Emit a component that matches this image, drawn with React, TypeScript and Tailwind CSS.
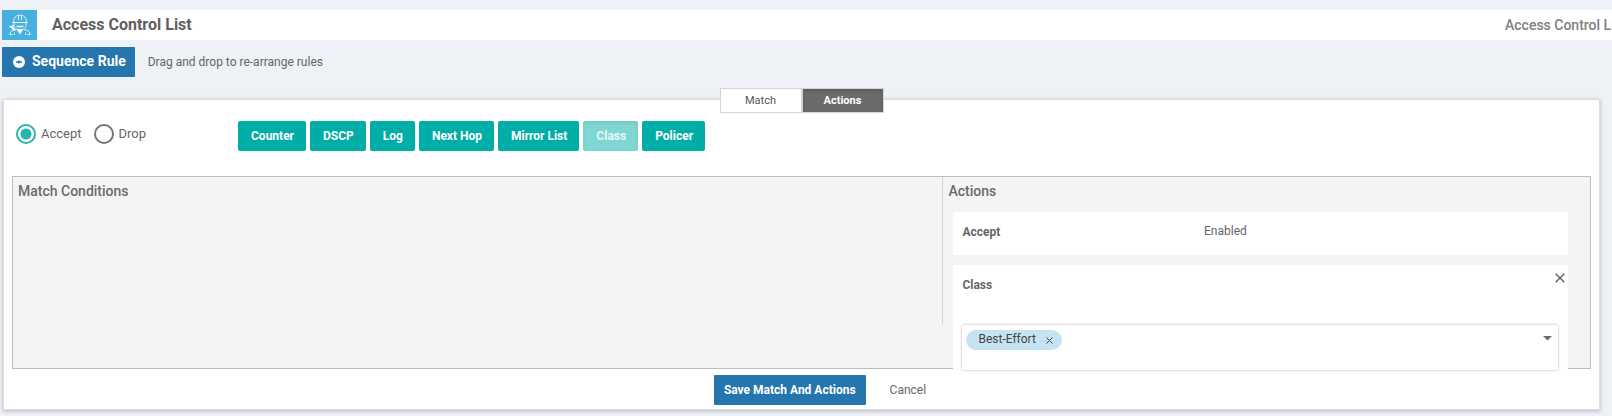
import { useState } from "react";
import type { ReactNode } from "react";

function EngineerIcon() {
  return (
    <svg viewBox="0 0 22 22" className="h-[22px] w-[22px]" fill="none" stroke="white" strokeWidth="0.8" strokeLinecap="round" aria-hidden="true">
      <path d="M4.500 8C4.500 3.600 7 1.200 11 1.200s6.500 2.400 6.500 6.800" />
      <path d="M9.500 1.500v4.200M12.500 1.500v4.200" />
      <path d="M3.800 8.500h14.400" strokeWidth="1" />
      <path d="M5 9v1.500c0 3.200 2.500 5.200 6 5.200s6-2 6-5.200V9" />
      <path d="M7.600 12.300c1.800 1.300 5 1.300 6.800 0z" fill="white" strokeWidth="0.500" />
      <path d="M8.200 15.800h5.600L11 19.800z" fill="white" strokeWidth="0.500" />
      <path d="M1 20.600c.2-2.400 1-3.700 3.400-4.400l2.600-.8M21 20.600c-.2-2.400-1-3.700-3.400-4.400l-2.600-.8M5.400 20.600v-1.600M16.600 20.600v-1.600M1 20.600h2.400M18.600 20.600H21" />
      <path d="M1.200 12.500l1.500.9 1.100-1.600M3 13.500l2.400 2.400" strokeWidth="1.800" />
    </svg>
  );
}

function CrossIcon({ className }: { className: string }) {
  return (
    <svg viewBox="0 0 10 10" className={className} stroke="currentColor" strokeWidth="1.400" aria-hidden="true">
      <path d="M0.700 0.700L9.300 9.300M9.300 0.700L0.700 9.300" />
    </svg>
  );
}

function Radio({ label, checked, onChange }: { label: string; checked: boolean; onChange: () => void }) {
  return (
    <label className="flex items-center gap-[5px] text-[13px] leading-5">
      <input
        type="radio"
        name="verdict"
        checked={checked}
        onChange={onChange}
        className="h-5 w-5 appearance-none rounded-full border-2 border-[#757575] bg-white checked:border-[#26b5a8] checked:bg-[radial-gradient(circle,#26b5a8_5px,white_6px)]"
      />
      {label}
    </label>
  );
}

function Tab({ active, onClick, children }: { active: boolean; onClick: () => void; children: ReactNode }) {
  return (
    <button
      type="button"
      role="tab"
      aria-selected={active}
      onClick={onClick}
      className={
        active
          ? "h-[25px] w-[82px] border border-[#d4d4d4] bg-[#6b6b6b] pt-px text-[11px] font-bold text-white shadow-[inset_0_2px_4px_rgba(0,0,0,0.15)]"
          : "h-[25px] w-[82px] border border-[#d4d4d4] bg-white pt-px text-[11px] text-[#555]"
      }
    >
      {children}
    </button>
  );
}

const actionTypes = ["Counter", "DSCP", "Log", "Next Hop", "Mirror List", "Class", "Policer"];

export default function App() {
  const [verdict, setVerdict] = useState("Accept");
  const [tab, setTab] = useState("Actions");
  const [hasClass, setHasClass] = useState(true);
  const [queues, setQueues] = useState(["Best-Effort"]);

  return (
    <div className="min-h-screen overflow-hidden bg-[#eef1f6] pt-[10px] font-['Roboto',sans-serif] text-[12px] text-[#666]">
      <header className="ml-[2px] flex h-[30px] items-center bg-white whitespace-nowrap">
        <div className="flex h-full w-[35px] items-center justify-center bg-[#46b1e1]">
          <EngineerIcon />
        </div>
        <h1 className="ml-[15px] text-[16px] font-bold text-[#606060]">Access Control List</h1>
        <div className="ml-auto w-[107px] overflow-hidden text-[14px] font-medium text-[#808080]">Access Control List</div>
      </header>

      <div className="mt-[7px] ml-[2px] flex items-center gap-[13px]">
        <button type="button" className="flex h-[30px] items-center gap-[7px] rounded-[1px] bg-[#2575ae] pr-[9px] pb-px pl-[11px] text-[14px] font-bold text-white">
          <svg viewBox="0 0 12 12" className="h-3 w-3" aria-hidden="true">
            <circle cx="6" cy="6" r="6" fill="white" />
            <path d="M3 6h6M6 4.500v3" stroke="#2575ae" strokeWidth="1.600" />
          </svg>
          Sequence Rule
        </button>
        <p className="pb-px">Drag and drop to re-arrange rules</p>
      </div>

      <main className="mt-[22px] mr-3 ml-[3px] border border-[#dcdee3] bg-white px-2 pb-1 shadow-[0_1px_4px_rgba(0,0,0,0.25)]">
        <div role="tablist" className="-mt-3 flex justify-center">
          <Tab active={tab === "Match"} onClick={() => setTab("Match")}>Match</Tab>
          <Tab active={tab === "Actions"} onClick={() => setTab("Actions")}>Actions</Tab>
        </div>

        <div className="mt-2 flex items-center">
          <div className="flex w-[226px] gap-3 pb-1 pl-1">
            <Radio label="Accept" checked={verdict === "Accept"} onChange={() => setVerdict("Accept")} />
            <Radio label="Drop" checked={verdict === "Drop"} onChange={() => setVerdict("Drop")} />
          </div>
          <div className="flex gap-1">
            {actionTypes.map((name) => (
              <button
                key={name}
                type="button"
                disabled={name === "Class" && hasClass}
                onClick={() => name === "Class" && setHasClass(true)}
                className="h-[30px] rounded-[2px] bg-[#00ada7] pr-3 pl-[13px] text-[12px] font-bold text-white disabled:bg-[#80d6d3] disabled:text-white/80 disabled:shadow-[inset_0_2px_4px_rgba(0,0,0,0.08)]"
              >
                {name}
              </button>
            ))}
          </div>
        </div>

        <div className="mt-[25px] flex items-start border border-[#bdbdc4] bg-[#f4f4f4]">
          <section className="min-h-[147px] w-[59%] border-r border-[#d4d4d4] px-[5px] pt-1">
            <h2 className="text-[14px] leading-5 font-medium text-[#6b6b6b]">Match Conditions</h2>
          </section>

          <section className="flex-1 pt-1">
            <h2 className="pl-[5px] text-[14px] leading-5 font-medium text-[#6b6b6b]">Actions</h2>
            <div className="mt-[11px] mr-[22px] ml-[10px] flex flex-col gap-[10px]">
              <div className="grid h-[43px] grid-cols-[2fr_3fr] items-center gap-[5px] bg-white px-[9px] pb-[5px]">
                <h3 className="pt-[2px] font-bold">{verdict}</h3>
                <span>Enabled</span>
              </div>
              {hasClass && (
                <div className="relative -mb-[5px] bg-white pt-[10px] pr-[10px] pb-[3px] pl-[9px]">
                  <button type="button" aria-label="Remove class" onClick={() => setHasClass(false)} className="absolute top-2 right-[3px] text-[#5f5f5f]">
                    <CrossIcon className="block h-[10px] w-[10px]" />
                  </button>
                  <h3 className="leading-5 font-bold">Class</h3>
                  <div className="mt-[30px] flex h-[45px] items-start justify-between rounded-[2px] bg-white px-1 pt-[5px] shadow-[0_0_3px_rgba(0,0,0,0.3)]">
                    <div className="flex gap-1">
                      {queues.map((queue) => (
                        <span key={queue} className="flex h-5 items-center gap-[10px] rounded-full bg-[#c6e3f4] pr-[9px] pl-3 text-[#444]">
                          <span className="pb-[2px]">{queue}</span>
                          <button type="button" aria-label={`Remove ${queue}`} onClick={() => setQueues(queues.filter((q) => q !== queue))}>
                            <CrossIcon className="block h-[7px] w-[7px]" />
                          </button>
                        </span>
                      ))}
                    </div>
                    <button type="button" aria-label="Choose class" onClick={() => setQueues(["Best-Effort"])} className="p-[2px] pt-[6px]">
                      <svg viewBox="0 0 9 5" className="block h-[5px] w-[9px]" aria-hidden="true">
                        <path d="M0 0h9L4.500 4.500z" fill="#6b6b6b" />
                      </svg>
                    </button>
                  </div>
                </div>
              )}
            </div>
          </section>
        </div>

        <footer className="mt-[6px] flex items-center justify-center gap-6 pl-[37px]">
          <button type="button" className="h-[30px] rounded-[1px] bg-[#2575ae] px-[10px] text-[12px] font-bold text-white">Save Match And Actions</button>
          <button type="button">Cancel</button>
        </footer>
      </main>
    </div>
  );
}
